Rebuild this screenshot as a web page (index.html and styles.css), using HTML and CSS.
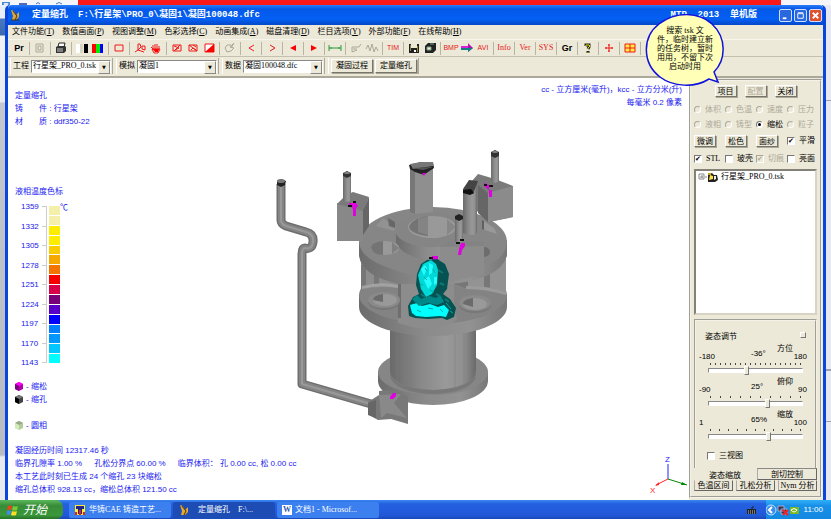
FILE: index.html
```
<!DOCTYPE html>
<html lang="zh-CN">
<head>
    <meta charset="UTF-8">
    <meta name="viewport" content="width=device-width, initial-scale=1.0">
    <title>定量缩孔</title>
    <link rel="stylesheet" href="styles.css">
</head>
<body>
    <div class="behind-top">
        <svg viewBox="0 0 78 5"><path d="M2 2h8v3H2z" fill="#4a88d0"/><path d="M4 3l1 2 1-2 1 2 1-2" stroke="#fff" fill="none"/><path d="M19 3h8v2h-8z" fill="#5868b8"/><path d="M36 4q2-3 4 0M56 4q3-3 6 0" stroke="#4878c8" fill="none"/></svg>
        <span class="behind-red"></span>
    </div>

    <div class="desktop">
        <div class="window">
            <header class="titlebar">
                <svg class="app-icon" viewBox="0 0 10 12"><path d="M1 1l3 1 2 4 3-3v5l-3 3H2l1-4z" fill="#e0a838"/><path d="M3 2l4 5-2 4M1 11h8" stroke="#4a3008" fill="none"/></svg>
                <h1>定量缩孔</h1>
                <span>F:\行星架\PRO_0\凝固1\凝固100048.dfc</span>
                <span class="edition">MTR&nbsp; 2013&nbsp; 单机版</span>
                <div class="win-buttons">
                    <button aria-label="最小化"><svg viewBox="0 0 12 12"><path d="M3 9h4" stroke="#fff" stroke-width="2"/></svg></button>
                    <button aria-label="最大化"><svg viewBox="0 0 12 12"><path d="M3 4h6v5H3zM3 3h6" stroke="#fff" fill="none"/></svg></button>
                    <button class="close" aria-label="关闭"><svg viewBox="0 0 12 12"><path d="M3 3l6 6M9 3l-6 6" stroke="#fff" stroke-width="2"/></svg></button>
                </div>
            </header>

            <nav class="menu">
                <button>文件功能(<u>T</u>)</button>
                <button>数值画面(<u>P</u>)</button>
                <button>视图调整(<u>M</u>)</button>
                <button>色彩选择(<u>C</u>)</button>
                <button>动画集成(<u>A</u>)</button>
                <button>磁盘清理(<u>D</u>)</button>
                <button>栏目选项(<u>Y</u>)</button>
                <button>外部功能(<u>F</u>)</button>
                <button>在线帮助(<u>H</u>)</button>
            </nav>

            <div class="toolbar">
                <button class="strong">Pr</button>
                <i></i>
                <button aria-label="页面"><svg viewBox="0 0 16 14"><path d="M4 3h7v8H4zM6 5h3v4H6z" stroke="#aca899" fill="none"/></svg></button>
                <i></i>
                <button aria-label="打印"><svg viewBox="0 0 16 14"><path d="M6 2h6l-1 4H5z" fill="#fff" stroke="#222"/><path d="M3 6l2-1h7l1 1v4l-2 2H3z" fill="#333"/><path d="M4 8h6M4 10h6" stroke="#ccc"/></svg></button>
                <i></i>
                <button aria-label="黑白"><svg viewBox="0 0 16 14"><path d="M2 3h4v9H2z" fill="#fff"/><path d="M6 3h3v9H6z" fill="#d8d4c4"/><path d="M10 3h4v9h-4z" fill="#000"/></svg></button>
                <button aria-label="彩色"><svg viewBox="0 0 16 14"><path d="M2 3h4v9H2z" fill="red"/><path d="M6 3h4v9H6z" fill="#0e0"/><path d="M10 3h3v9h-3z" fill="#00f"/></svg></button>
                <i></i>
                <button aria-label="框选"><svg viewBox="0 0 16 14"><path d="M4 4h8v6H4z" class="red"/></svg></button>
                <i></i>
                <button aria-label="旋转"><svg viewBox="0 0 16 14"><path d="M6 3v6l-3 2M6 3h2l1 3-3 3 6 2M10 5h3v4l-3-1z" class="red"/></svg></button>
                <button aria-label="移动"><svg viewBox="0 0 16 14"><path d="M5 8L3 6M5 9V4M7 8V3M9 8V3M11 8V5M4 8l2 4h4l2-4z" class="red"/><path d="M5 8h6l-1 3H7z" fill="red"/></svg></button>
                <i></i>
                <button aria-label="剖切一"><svg viewBox="0 0 16 14"><path d="M4 4h8v6H4zM5 10l6-6M5 5l5 2-4 2" class="red"/></svg></button>
                <button aria-label="剖切二"><svg viewBox="0 0 16 14"><path d="M4 4h8v6H4zM4 4l8 6M6 9l2-2 3 2M8 4l3 2" class="red"/></svg></button>
                <button aria-label="剖切三"><svg viewBox="0 0 16 14"><path d="M4 3h9v8H4z" fill="#fff" class="red"/><path d="M13 3v8H4z" fill="red"/></svg></button>
                <i></i>
                <button aria-label="还原"><svg viewBox="0 0 16 14"><path d="M9 4H5L3 7l2 4 4-1 3-3-4-1 4-4-3 5" class="gray"/></svg></button>
                <i></i>
                <button aria-label="后退"><svg viewBox="0 0 16 14"><path d="M11 4L6 7l5 3" class="red"/></svg></button>
                <i></i>
                <button aria-label="前进"><svg viewBox="0 0 16 14"><path d="M6 4l5 3-5 3" class="red"/></svg></button>
                <i></i>
                <button aria-label="倒放"><svg viewBox="0 0 16 14"><path d="M11 4v6L5 7z" fill="red"/></svg></button>
                <i></i>
                <button aria-label="播放"><svg viewBox="0 0 16 14"><path d="M5 4v6l6-3z" fill="red"/></svg></button>
                <i></i>
                <button aria-label="测距"><svg viewBox="0 0 16 14"><path d="M2 4v6M14 4v6M2 7h12M4 6v2M12 6v2" stroke="#2a9a3a" fill="none"/></svg></button>
                <i></i>
                <button aria-label="标注"><svg viewBox="0 0 16 14"><path d="M4 6h7l2-3M4 6v5l5-2M5 8h4" class="gray"/></svg></button>
                <button aria-label="曲线"><svg viewBox="0 0 16 14"><path d="M2 8l2-4 2 6 2-7 2 8 2-5 2 4" class="gray"/></svg></button>
                <i></i>
                <button class="tag">TIM</button>
                <i></i>
                <button aria-label="保存"><svg viewBox="0 0 16 14"><path d="M3 3h10v9H3z" fill="#222"/><path d="M4 4h1v6H4zM11 5h1v6h-1z" fill="#8a8a30"/><path d="M5 3h6v4H5z" fill="#ece9d8"/><path d="M8 9h2v2H8z" fill="#fff"/></svg></button>
                <button aria-label="另存"><svg viewBox="0 0 16 14"><path d="M6 2h8v7l-3 3H3V5z" fill="#222"/><path d="M5 6h4v3H5zM8 3h4" fill="#ece9d8" stroke="#7aa080"/></svg></button>
                <i></i>
                <button class="tag">BMP</button>
                <button aria-label="转换"><svg viewBox="0 0 16 14"><path d="M2 5h7V2l5 5-5 4V9H2z" fill="#e020e0"/><path d="M2 7h12l-5 4V9H2z" fill="#108080"/><path d="M9 3l5 4h-5z" fill="#111" opacity=".3"/></svg></button>
                <button class="tag">AVI</button>
                <i></i>
                <button class="tag serif">Info</button>
                <i></i>
                <button class="tag serif">Ver</button>
                <i></i>
                <button class="tag serif">SYS</button>
                <i></i>
                <button class="strong">Gr</button>
                <i></i>
                <button aria-label="帮助"><svg viewBox="0 0 16 14"><path d="M6 5V4h3v2L8 8M8 10v2" stroke="#222" stroke-width="3" fill="none"/><path d="M6 5V4h3l1 1-2 2v1M8 11v1" stroke="#e8e000" fill="none"/></svg></button>
                <i></i>
                <button aria-label="居中"><svg viewBox="0 0 16 14"><path d="M8 3v8M4 7h8M7 4h2M7 10h2M5 6v2M11 6v2" class="red"/></svg></button>
                <i></i>
                <button aria-label="多视图"><svg viewBox="0 0 16 14"><path d="M3 3h10v8H3zM8 3v8M3 7h10" fill="#ffee40" class="red"/></svg></button>
                <i></i>
            </div>

            <div class="picker-bar">
                <div class="picker">
                    <label for="project">工程</label>
                    <span class="drop"><select id="project"><option>行星架_PRO_0.tsk</option></select></span>
                </div>
                <div class="picker">
                    <label for="simulation">模拟</label>
                    <span class="drop"><select id="simulation"><option>凝固1</option></select></span>
                </div>
                <div class="picker">
                    <label for="data">数据</label>
                    <span class="drop"><select id="data"><option>凝固100048.dfc</option></select></span>
                </div>
                <div class="picker">
                    <button class="btn">凝固过程</button>
                    <button class="btn">定量缩孔</button>
                </div>
            </div>

            <main>
                <section class="viewport">
                    <div class="view-head">
                        <div class="part">
                            <p>定量缩孔</p>
                            <p>铸<span class="wide-gap"></span>件 : 行星架</p>
                            <p>材<span class="wide-gap"></span>质 : ddf350-22</p>
                        </div>
                        <div class="units">
                            <p>cc - 立方厘米(毫升)，kcc - 立方分米(升)</p>
                            <p>每毫米 0.2 像素</p>
                        </div>
                    </div>

                    <div class="view-body">
                        <div class="legend">
                            <h2>液相温度色标</h2>
                            <div class="scale">
                                <ol class="temps">
                                    <li>1359</li><li>1332</li><li>1305</li><li>1278</li><li>1251</li><li>1224</li><li>1197</li><li>1170</li><li>1143</li>
                                </ol>
                                <div class="colors">
                                    <i class="c1"></i><i class="c1"></i><i class="c2"></i><i class="c2"></i>
                                    <i class="c3"></i><i class="c4"></i><i class="c5"></i><i class="c6"></i>
                                    <i class="c7"></i><i class="c8"></i><i class="c9"></i><i class="c10"></i>
                                    <i class="c11"></i><i class="c12"></i><i class="c13"></i><i class="c14"></i>
                                </div>
                                <span class="celsius">℃</span>
                            </div>
                            <ul class="phases">
                                <li><svg viewBox="0 0 8 9"><path d="M4 0l4 2v5L4 9 0 7V2z" fill="#b000b0"/><path d="M4 0l4 2-4 2-4-2z" fill="#f0f"/><path d="M0 2l4 2v5L0 7z" fill="#800080"/></svg>- 缩松</li>
                                <li><svg viewBox="0 0 8 9"><path d="M4 0l4 2v5L4 9 0 7V2z" fill="#444"/><path d="M4 0l4 2-4 2-4-2z" fill="#777"/><path d="M0 2l4 2v5L0 7z" fill="#000"/></svg>- 缩孔</li>
                                <li class="solid"><svg viewBox="0 0 8 9"><path d="M4 0l4 2v5L4 9 0 7V2z" fill="#b4cc9c"/><path d="M4 0l4 2-4 2-4-2z" fill="#98a888"/><path d="M0 2l4 2v5L0 7z" fill="#d4ecbc"/></svg>- 圆相</li>
                            </ul>
                        </div>

                        <svg class="model" viewBox="265 140 260 290" role="img" aria-label="行星架模型">
                            <defs>
                                <linearGradient id="cyl"><stop offset="0" stop-color="#6a6a6a"/><stop offset=".35" stop-color="#888"/><stop offset=".65" stop-color="#999"/><stop offset=".85" stop-color="#909090"/><stop offset="1" stop-color="#6a6a6a"/></linearGradient>
                                <linearGradient id="rim"><stop offset="0" stop-color="#6c6c6c"/><stop offset=".45" stop-color="#8b8b8b"/><stop offset=".75" stop-color="#929292"/><stop offset="1" stop-color="#787878"/></linearGradient>
                            </defs>
                            <!-- feed pipe -->
                            <g fill="none" stroke-linejoin="round">
                                <path d="M281 184v36q0 4 5 6l20 6q8 2 7 10t-8 6q-3 0-3 6v130l69 20" stroke="#6e6e6e" stroke-width="9"/>
                                <path d="M281 184v36q0 4 5 6l20 6q8 2 7 10t-8 6q-3 0-3 6v130l69 20" stroke="#858585" stroke-width="6"/>
                                <path d="M281 184v36q0 4 5 6l20 6q8 2 7 10t-8 6q-3 0-3 6v130l69 20" stroke="#999" stroke-width="2"/>
                            </g>
                            <path d="M277 181l4-2 5 2-1 4-4 2-4-2z" fill="#222"/><ellipse cx="281" cy="181" rx="4" ry="2" fill="#777"/>
                            <!-- base flange -->
                            <path d="M378 372v9a55 24 0 0 0 110 0v-9z" fill="url(#rim)"/>
                            <ellipse cx="433" cy="372" rx="55" ry="23" fill="#868686"/>
                            <path d="M390 315v56a43 19 0 0 0 86 0v-56z" fill="url(#cyl)"/>
                            <path d="M390 371a43 19 0 0 0 86 0v4a43 19 0 0 1-86 0z" fill="#787878"/>
                            <path d="M397 325v58M404 325v61M412 325v64M455 325v63M464 325v59" stroke="#7f7f7f" opacity=".5"/>
                            <!-- lower disc -->
                            <path d="M359 294v13a74 29 0 0 0 148 0v-13z" fill="url(#rim)"/>
                            <ellipse cx="433" cy="295" rx="74" ry="29" fill="#838383"/>
                            <path d="M361 256h37v32q-20-3-37 2z" fill="#8d8d8d"/>
                            <path d="M361 265h5v23l-5 2zM374 275h5v10h-5z" fill="#777"/>
                            <path d="M362 286q18-5 36-1v3q-18-4-36 1z" fill="#a2a2a2"/>
                            <path d="M455 270l26-8h25v30q-20-7-38-3l-13-5z" fill="#777"/>
                            <path d="M468 272h16v15h-16zM490 258h16v34l-16-4z" fill="#939393"/>
                            <path d="M466 286q20-1 40 6v3q-20-6-40-6z" fill="#9b9b9b"/>
                            <path d="M398 270h56v34l3 15q-6 9-41 9l-18-5z" fill="#8c8c8c"/>
                            <path d="M398 276h3v42h-3z" fill="#6e6e6e"/>
                            <ellipse cx="384" cy="302" rx="16" ry="8" fill="#777"/><ellipse cx="384" cy="300" rx="16" ry="8" fill="#8a8a8a"/><ellipse cx="385" cy="300" rx="12" ry="6" fill="#999"/><path d="M373 300a12 6 0 0 1 10-6v8z" fill="#6b6b6b"/>
                            <ellipse cx="475" cy="305" rx="16" ry="8" fill="#777"/><ellipse cx="475" cy="303" rx="16" ry="8" fill="#8a8a8a"/><ellipse cx="475" cy="304" rx="12" ry="6" fill="#999"/><path d="M463 304a12 6 0 0 1 10-6v9z" fill="#6b6b6b"/>
                            <!-- upper disc -->
                            <path d="M359 242v14q3 20 40 28l50 0q50-4 58-28v-16z" fill="url(#rim)"/>
                            <path d="M359 242a74 35 0 0 1 148 0q-1 17-24 25l-42 11q-25 1-52-10-29-10-30-26z" fill="#868686"/>
                            <path d="M383 218l5 4 8 5-2 4-18-5z" fill="#929292"/><path d="M388 218l7 4v6l-6-2z" fill="#676767"/>
                            <path d="M482 220l12 8 3 6-15-5z" fill="#999"/><path d="M482 220l2 1v9l-2-1z" fill="#606060"/>
                            <path d="M396 231v12q8 15 36 17l30-4v-20z" fill="url(#rim)"/>
                            <ellipse cx="431" cy="230" rx="36" ry="17" fill="#858585"/>
                            <ellipse cx="432" cy="227" rx="24" ry="11" fill="#999"/>
                            <path d="M409 227q3-9 19-11v20q-17-2-19-9z" fill="#747474"/><path d="M418 219l10-3v19l-10-3z" fill="#848484"/><path d="M447 219l9 8-9 8z" fill="#878787"/>
                            <ellipse cx="385" cy="248" rx="14" ry="7" fill="#999"/><path d="M371 248a14 7 0 0 1 12-7v14q-10 0-12-7z" fill="#747474"/><path d="M392 242l7 6-7 6z" fill="#808080"/>
                            <ellipse cx="484" cy="252" rx="6" ry="5" fill="#6d6d6d"/>
                            <path d="M440 247l44-3v30l-34 8-10-15z" fill="#8c8c8c"/>
                            <path d="M440 247l10-6 34 1v4z" fill="#838383"/>
                            <!-- risers and blocks -->
                            <path d="M337 203l26 7v31h-26z" fill="#888"/><path d="M337 204l9-9 7-3 16 5-6 14z" fill="#7a7a7a"/><path d="M363 210l6-13v29l-6 9z" fill="#666"/>
                            <path d="M343 174h8v27l-4 1-4-1z" fill="url(#cyl)"/><path d="M343 173l4-2 4 2v3l-4 2-4-2z" fill="#333"/><ellipse cx="347" cy="173" rx="3" ry="1" fill="#888"/>
                            <path d="M410 168h23v44l-18 2-5-2z" fill="#8f8f8f"/><path d="M410 168h5v46l-5-2z" fill="#777"/>
                            <path d="M409 165l12-3 12 0 1 6-6 4-4 3-9-3-5-3z" fill="#222"/><path d="M410 164l11-2h12v4l-20 3z" fill="#777"/><path d="M411 168l22-1-10 3z" fill="#555"/>
                            <path d="M472 181l6-7 17 5 18 7v31l-24 5-12-11z" fill="#7a7a7a"/><path d="M488 193l25-7v31l-25 5z" fill="#8b8b8b"/><path d="M478 185l10 8v29l-10-9z" fill="#666"/>
                            <path d="M491 153h8v28l-4 2-4-2z" fill="url(#cyl)"/><path d="M491 152l4-2 4 2v4l-4 2-4-2z" fill="#333"/><ellipse cx="495" cy="152" rx="3" ry="1" fill="#888"/>
                            <path d="M463 190l14-9v52q-5 4-14 0z" fill="url(#cyl)"/><path d="M463 189l6-9 9 1-5 13-9-1z" fill="#444"/><path d="M463 190l8-1 3 4-4 2-7-2z" fill="#111"/>
                            <path d="M455 217h8v25h-8z" fill="url(#cyl)"/><path d="M455 216l4-2 4 2v3l-4 2-4-2z" fill="#222"/>
                            <!-- runner end -->
                            <path d="M368 402l11-7v-4l8-1 14 3 7 4v27l-17-5-13 1-9-5z" fill="#787878"/>
                            <path d="M379 395l22-1-7 9 13 15-20-5-6 5z" fill="#898989"/><path d="M368 403l8-3v18l-8-3z" fill="#666"/>
                            <!-- shrinkage -->
                            <g fill="#e000e0"><path d="M352 207h4v9h-3v-6zM349 203h7l2 3-3 3-3-3h-3zM422 173h4l-2 3zM484 183l5 2 0 5h3v7h-3v-7l-5-4zM461 243h4v3l-3 4-1 5h-3l1-6zM432 256h6v4h-6zM390 397l3-4h3v3l-3 3h-3z"/></g>
                            <path d="M348 206h4M353 202h3M484 185h3M489 186h4M456 243h4M460 240h4M429 258h4" stroke="#111" stroke-width="2"/>
                            <!-- liquid core -->
                            <path d="M417 274l4-10 6-4 10-1 8 5 4 10-2 15-4 5 7 5 6 9-2 9-7 3-5-2-14 1-13-1-6-2-1-10 5-9 6-3-3-9z" fill="#065252"/>
                            <path d="M418 275l5-11 8-4 5 4 2 6-1 15-5 9-6 3-5-8z" fill="#00d8d8"/>
                            <path d="M421 269l4-4 2 3-3 8zM429 263l4 2-1 8-3 2zM424 280l5-4 3 8-4 5zM434 277h3v6l-3 2z" fill="#2ff"/>
                            <path d="M410 305l7-2 5 3 8-2 8 3 6-2 5 5-3 7-6-1-14 1-10-1-4-3z" fill="#0ff"/>
                            <path d="M412 299l5-4 4 4 8-3 7 2 4-3 4 7-7 3-9-2-9 3z" fill="#008888"/>
                            <path d="M424 277l3 3M420 284l3 1M433 269l2 4M430 290l4 2M417 310l4 2M428 308l5 1M440 309l3 3M425 268l2 3M446 303l5 6M450 311l3 2" stroke="#0aa"/>
                            <path d="M438 270l5 3M440 283l4 2M421 294l4 3M436 294l4 2M445 299l4 3" stroke="#0b7777" stroke-width="2"/>
                        </svg>
                    </div>

                    <div class="view-foot">
                        <div class="stats">
                            <p>凝固经历时间 12317.46 秒</p>
                            <p><span>临界孔隙率 1.00 %</span><span>孔松分界点 60.00 %</span><span>临界体积： 孔 0.00 cc, 松 0.00 cc</span></p>
                            <p>本工艺此时刻已生成 24 个缩孔 23 块缩松</p>
                            <p>缩孔总体积 928.13 cc，缩松总体积 121.50 cc</p>
                        </div>
                        <svg class="axes" viewBox="0 -6 40 46">
                            <path d="M20 22V7" stroke="#22f"/><path d="M20 22L8 28" stroke="#f22"/><path d="M20 22l19 6" stroke="#080"/>
                            <path d="M11 25l-4 4 4-1z" fill="#f22"/><path d="M34 25l5 3-6 0z" fill="#080"/>
                            <text x="17" y="5" fill="#22f">Z</text><text x="2" y="36" fill="#f22">X</text>
                        </svg>
                    </div>
                </section>

                <aside class="panel">
                    <div class="panel-top">
                        <button class="btn">项目</button>
                        <button class="btn" disabled>配置</button>
                        <button class="btn">关闭</button>
                    </div>
                    <div class="options">
                        <label><input type="radio" name="field" disabled>体积</label>
                        <label><input type="radio" name="field" disabled>色温</label>
                        <label><input type="radio" name="field" disabled>速度</label>
                        <label><input type="radio" name="field" disabled>压力</label>
                        <label><input type="radio" name="field" disabled>液相</label>
                        <label><input type="radio" name="field" disabled>铸型</label>
                        <label><input type="radio" name="field" checked>缩松</label>
                        <label><input type="radio" name="field" disabled>粒子</label>
                    </div>
                    <div class="options checks">
                        <button class="btn">微调</button>
                        <button class="btn">松色</button>
                        <button class="btn">面纱</button>
                        <label><input type="checkbox" checked>平滑</label>
                        <label><input type="checkbox" checked>STL</label>
                        <label><input type="checkbox">玻壳</label>
                        <label><input type="checkbox" checked disabled>切痕</label>
                        <label><input type="checkbox">亮面</label>
                    </div>
                    <div class="tree">
                        <svg viewBox="0 0 20 10"><path d="M1 2h5v5H1zM2 5h3M4 3v3M7 5h2" stroke="#888" fill="none"/><path d="M10 3l4-2 2 2 3 0 1 5-3 2h-7z" fill="#222"/><path d="M12 3l3 1v3l-4 1z" fill="#ffe040"/><path d="M16 4l2 0v3l-2 1z" fill="#eee"/><path d="M10 1h3v2h-3z" fill="#c8a020"/></svg>
                        <span>行星架_PRO_0.tsk</span>
                    </div>
                    <div class="pose">
                        <div class="pose-head"><h2>姿态调节</h2><button aria-label="折叠"></button></div>
                        <div class="slider">
                            <div class="slider-text"><span>-180</span><output>-36°</output><label for="azimuth">方位</label><span>180</span></div>
                            <div class="ticks ticks-5"></div>
                            <input type="range" id="azimuth" min="-180" max="180" value="-36">
                        </div>
                        <div class="slider">
                            <div class="slider-text"><span>-90</span><output>25°</output><label for="pitch">俯仰</label><span>90</span></div>
                            <div class="ticks ticks-10"></div>
                            <input type="range" id="pitch" min="-90" max="90" value="25">
                        </div>
                        <div class="slider">
                            <div class="slider-text"><span>1</span><output>65%</output><label for="zoom">缩放</label><span>100</span></div>
                            <div class="ticks ticks-9"></div>
                            <input type="range" id="zoom" min="1" max="100" value="65">
                        </div>
                        <label class="three"><input type="checkbox">三视图</label>
                    </div>
                    <div class="tabs">
                        <button class="current">姿态缩放</button>
                        <button>剖切控制</button>
                    </div>
                    <div class="tabs-low">
                        <button>色温区间</button>
                        <button>孔松分析</button>
                        <button>Nym 分析</button>
                    </div>
                </aside>
            </main>

            <div class="callout">
                <svg viewBox="0 0 80 74"><path d="M64 65C50 74 28 73 15 63-3 49-3 23 14 10 31-3 54-2 67 10c15 14 14 36 2 48l4 10z" fill="#ffffb8" stroke="#11d" stroke-width="1.5"/></svg>
                <p>搜索 tsk 文<br>件，临时建立新<br>的任务树，暂时<br>用用，不留下次<br>启动时用</p>
            </div>
        </div>
        <div class="behind-right"><i></i><i></i></div>
    </div>

    <footer class="taskbar">
        <button class="start"><svg viewBox="0 0 12 12"><path d="M1 2q2-1 4 0L4 6Q2 5 0 6z" fill="#f04020"/><path d="M6 2q3 1 5 0l-1 4q-2 1-5 0z" fill="#7c3"/><path d="M0 7q2-1 4 0l-1 4q-2-1-4 0z" fill="#48f"/><path d="M5 7q3 1 5 0l-1 4q-2 1-5 0z" fill="#fd2"/></svg>开始</button>
        <button class="task"><svg viewBox="0 0 12 12"><path d="M1 1h10v10H1z" fill="#fe3"/><path d="M2 2h8v3H8v5H4V5H2z" fill="#228"/><path d="M5 6h2v5H5zM1 8h2v3H1zM9 8h2v3H9z" fill="#d22"/></svg>华铸CAE 铸造工艺...</button>
        <button class="task active"><svg viewBox="0 0 12 12"><path d="M2 1l3 1 2 4 3-3v5l-3 3H3l1-4z" fill="#e0a838"/><path d="M4 2l4 5-2 4" stroke="#4a3008" fill="none"/></svg><span>定量缩孔</span>F:\...</button>
        <button class="task"><span class="word">W</span>文档1 - Microsof...</button>
        <svg class="keyboard" viewBox="0 0 9 10"><path d="M0 4h9v5H0z" fill="#222"/><path d="M5 4V2h2" stroke="#222" fill="none"/><path d="M1 6h7M1 8h7" stroke="#ccc" stroke-dasharray="1"/></svg>
        <div class="tray">
            <svg viewBox="0 0 34 12"><circle cx="5" cy="6" r="5" fill="#3a8ef0" stroke="#bfe0ff"/><path d="M6 3L3 6l3 3" stroke="#fff" stroke-width="2" fill="none"/><path d="M12 2h6v5h-6zM15 5h6v5h-6z" fill="#335" stroke="#aac"/><path d="M17 6l5 5M22 6l-5 5" stroke="#e22" stroke-width="2"/><path d="M24 3h9v7h-9z" fill="#7ab828"/><path d="M25 6q3-3 6 0-3 4-6 0" fill="none" stroke="#fff"/></svg>
            <time>11:00</time>
        </div>
    </footer>
</body>
</html>
```

FILE: styles.css
```
* {
    box-sizing: border-box;
}
body {
    margin: 0;
    min-height: 100vh;
    display: flex;
    flex-direction: column;
    background-color: #fff;
    font-family: "Liberation Serif", "Noto Sans CJK SC", serif;
    font-size: 8px;
    line-height: 10px;
    color: #000;
}
p, h1, h2, ol, ul {
    margin: 0;
    padding: 0;
    font-size: inherit;
    font-weight: normal;
    list-style: none;
}
button, select, input {
    font: inherit;
    color: inherit;
    margin: 0;
    padding: 0;
}
button {
    border: none;
    background: none;
    white-space: nowrap;
}
svg {
    display: block;
    flex: none;
}

/* what shows round the window */
.behind-top {
    display: flex;
    height: 5px;
    padding-right: 50px;
    background-color: #f4f6fa;
}
.behind-top svg {
    width: 78px;
    height: 5px;
}
.behind-red {
    flex: 1;
    background-color: #fa1818;
}
.desktop {
    flex: 1;
    display: flex;
    padding-left: 5px;
    background: linear-gradient(#e8eefa 0 13px, #4a78c0 14px, #3a68b0 30px, #f0f2f5 31px, #e8eaee 97px, #c4c8ce 98px, #b8bcc2 450px, #e8eaee 452px);
}
.behind-right {
    width: 5px;
    padding-top: 95px;
    background-color: #e6e8f2;
}
.behind-right i {
    display: block;
    height: 270px;
    border-top: 1px solid #9aa0b0;
    border-bottom: 1px solid #9aa0b0;
}
.behind-right i + i {
    height: 52px;
}

.window {
    position: relative;
    flex: 1;
    display: flex;
    flex-direction: column;
    border: solid #0a46dc;
    border-width: 0 3px;
    border-radius: 5px 5px 0 0;
    background-color: #ece9d8;
}
.titlebar {
    display: flex;
    align-items: center;
    height: 20px;
    padding: 0 1px 0 2px;
    border-radius: 4px 4px 0 0;
    background: linear-gradient(#2a7cf8, #0458e8 20%, #0460f4 70%, #0448c8);
    color: #fff;
    font-family: "Liberation Mono", "Noto Sans CJK SC", monospace;
    font-size: 9px;
    font-weight: bold;
    white-space: pre;
}
.titlebar h1 {
    margin: 0 10px 0 12px;
    font-weight: bold;
}
.app-icon {
    width: 10px;
    height: 12px;
}
.edition {
    margin-left: auto;
    margin-right: 22px;
}
.win-buttons {
    display: flex;
    gap: 2px;
}
.win-buttons button {
    width: 13px;
    height: 13px;
    border: 1px solid #cfe0ff;
    border-radius: 2px;
    background-color: #2a68e0;
}
.win-buttons .close {
    background-color: #e0502c;
}

.menu {
    display: flex;
    gap: 8px;
    height: 14px;
    padding-left: 4px;
}
.toolbar {
    display: flex;
    align-items: center;
    height: 17px;
    padding-left: 3px;
    border-top: 1px solid #f8f6ec;
}
.toolbar button {
    display: flex;
    justify-content: center;
    width: 16px;
    flex: none;
}
.toolbar svg {
    width: 16px;
    height: 14px;
}
.toolbar i {
    width: 1px;
    height: 13px;
    margin: 0 2px;
    flex: none;
    background-color: #b8b4a4;
}
.toolbar .strong {
    font-family: "Liberation Sans", sans-serif;
    font-size: 9px;
    font-weight: bold;
}
.toolbar .tag {
    font-family: "Liberation Sans", sans-serif;
    font-size: 7px;
    color: #e81818;
}
.toolbar .serif {
    font-family: "Liberation Serif", serif;
    font-size: 8px;
}
.red {
    stroke: #f01818;
}
.red:not([fill]), .gray {
    fill: none;
}
.gray {
    stroke: #aca899;
}

.picker-bar {
    display: flex;
    gap: 3px;
    height: 22px;
    padding: 1px 2px 2px;
    border-top: 1px solid #c4c0b0;
    border-bottom: 2px solid #aca899;
}
.picker {
    display: flex;
    align-items: center;
    gap: 2px;
    padding: 0 1px 0 2px;
    border-left: 1px solid #fff;
    border-right: 1px solid #aca899;
}
.drop {
    position: relative;
    width: 80px;
}
.drop select {
    appearance: none;
    display: block;
    width: 100%;
    height: 13px;
    padding: 0 1px;
    border: 1px solid;
    border-color: #888 #fff #fff #888;
    border-radius: 0;
    background-color: #fff;
}
.drop::after {
    content: "▼";
    position: absolute;
    top: 1px;
    right: 1px;
    width: 10px;
    height: 11px;
    border: 1px solid;
    border-color: #fff #888 #888 #fff;
    background-color: #ece9d8;
    font-family: "DejaVu Sans", sans-serif;
    font-size: 5px;
    text-align: center;
    pointer-events: none;
}
.btn {
    padding: 0 3px;
    border: 1px solid;
    border-color: #fff #77746a #77746a #fff;
    background-color: #ece9d8;
    box-shadow: 1px 1px #aca899;
}
.btn:disabled {
    color: #aca899;
}
.picker .btn {
    height: 14px;
    padding: 0 4px;
}

main {
    flex: 1;
    display: flex;
}

/* 3D view */
.viewport {
    flex: 1;
    display: flex;
    flex-direction: column;
    padding: 5px 7px 3px;
    background-color: #fff;
    color: #2020f0;
    font-family: "Liberation Sans", "Noto Sans CJK SC", sans-serif;
    line-height: 13px;
}
.view-head {
    display: flex;
    justify-content: space-between;
    height: 57px;
}
.part {
    padding-top: 6px;
}
.wide-gap {
    display: inline-block;
    width: 16px;
}
.units {
    text-align: right;
}
.view-body {
    flex: 1;
    display: flex;
}
.legend {
    width: 92px;
    padding-top: 45px;
}
.scale {
    display: flex;
    height: 169px;
    margin-top: 2px;
    padding-left: 6px;
}
.temps {
    display: flex;
    flex-direction: column;
    justify-content: space-between;
    width: 25px;
}
.temps li {
    display: flex;
    align-items: center;
    justify-content: space-between;
}
.temps li::after {
    content: "";
    width: 4px;
    height: 1px;
    background-color: #ccc;
}
.colors {
    display: flex;
    flex-direction: column;
    gap: 1px;
    width: 14px;
    margin: 6px 0;
    padding-left: 2px;
    border-left: 1px solid #ccc;
}
.colors i {
    flex: 1;
}
.c1 { background-color: #f4f0ac; }
.c2 { background-color: #fcec00; }
.c3 { background-color: #f8cc00; }
.c4 { background-color: #f4a800; }
.c5 { background-color: #f47400; }
.c6 { background-color: #f80000; }
.c7 { background-color: #d80048; }
.c8 { background-color: #780078; }
.c9 { background-color: #5800c8; }
.c10 { background-color: #0000fc; }
.c11 { background-color: #0080ff; }
.c12 { background-color: #0098ff; }
.c13 { background-color: #00c8ff; }
.c14 { background-color: #00ffff; }
.celsius {
    padding-top: 1px;
}
.phases {
    margin-top: 11px;
}
.phases li {
    display: flex;
    align-items: center;
    gap: 3px;
}
.phases svg {
    width: 8px;
    height: 9px;
}
.phases .solid {
    margin-top: 13px;
}
.model {
    width: 260px;
    height: 290px;
    margin: 0 auto;
}
.view-foot {
    display: flex;
    justify-content: space-between;
    align-items: flex-end;
}
.stats {
    padding-bottom: 1px;
}
.stats span {
    margin-right: 12px;
}
.axes {
    width: 40px;
    height: 46px;
    margin-right: -6px;
}

/* right panel */
.panel {
    display: flex;
    flex-direction: column;
    width: 133px;
    margin: 1px 1px 2px 0;
    padding: 4px 3px 5px;
    border: 2px groove #f4f2e6;
}
.panel-top {
    display: flex;
    justify-content: center;
    gap: 8px;
    margin-bottom: 5px;
}
.panel .btn {
    width: 22px;
    height: 12px;
    padding: 0;
    line-height: 9px;
}
.options {
    display: grid;
    grid-template-columns: repeat(4, 31px);
    grid-auto-rows: 15px;
    align-items: center;
}
.checks {
    grid-auto-rows: 18px;
    margin-bottom: 1px;
}
.options label, .three {
    display: flex;
    align-items: center;
    gap: 4px;
    white-space: nowrap;
}
.options label:has(:disabled) {
    color: #aca899;
}
.panel input[type="radio"], .panel input[type="checkbox"] {
    appearance: none;
    display: grid;
    place-items: center;
    width: 8px;
    height: 8px;
    flex: none;
    border: 1px solid;
    border-color: #777 #fff #fff #777;
    background-color: #fff;
    line-height: 6px;
}
.panel input[type="radio"] {
    width: 7px;
    height: 7px;
    border-radius: 50%;
}
.panel input:disabled {
    background-color: #ece9d8;
    border-color: #aca899 #fff #fff #aca899;
}
.panel input[type="radio"]:checked::before {
    content: "";
    width: 3px;
    height: 3px;
    border-radius: 50%;
    background-color: #000;
}
.panel input[type="checkbox"]:checked::before {
    content: "✔";
    font-family: "DejaVu Sans", sans-serif;
    font-size: 7px;
}
.tree {
    flex: 1;
    display: flex;
    gap: 3px;
    padding: 1px 2px;
    border: 2px inset #d8d4c4;
    background-color: #fff;
}
.tree svg {
    width: 20px;
    height: 10px;
}
.pose {
    margin-top: 4px;
    padding: 11px 9px 7px;
    border: 2px groove #f4f2e6;
    border-bottom: none;
}
.pose-head {
    display: flex;
    justify-content: space-between;
    margin-bottom: 1px;
}
.pose-head button {
    width: 6px;
    height: 6px;
    border: 1px solid;
    border-color: #fff #777 #777 #fff;
}
.slider {
    margin-bottom: 3px;
}
.slider-text {
    display: grid;
    grid-template-columns: 52px 26px 12px 1fr;
    align-items: end;
    height: 19px;
    margin: 0 -1px 0 -6px;
    font-family: "Liberation Sans", "Noto Sans CJK SC", sans-serif;
    white-space: nowrap;
}
.slider-text output {
    padding-bottom: 3px;
}
.slider-text label {
    padding-bottom: 8px;
}
.slider-text span:last-child {
    text-align: right;
}
.ticks {
    width: 91px;
    height: 2px;
    margin: 1px auto 3px;
}
.ticks-5 {
    background: repeating-linear-gradient(90deg, #444 0 1px, transparent 1px 5px);
}
.ticks-10 {
    background: repeating-linear-gradient(90deg, #444 0 1px, transparent 1px 10px);
}
.ticks-9 {
    background: repeating-linear-gradient(90deg, #444 0 1px, transparent 1px 9px);
}
.slider input {
    appearance: none;
    display: block;
    width: 95px;
    height: 5px;
    margin: 0 auto;
    border: 1px solid;
    border-color: #888 #fff #fff #888;
    background-color: #fff;
}
.slider input::-webkit-slider-thumb {
    appearance: none;
    width: 5px;
    height: 9px;
    border: 1px solid;
    border-color: #fff #777 #777 #fff;
    background-color: #ece9d8;
}
.three {
    margin: 12px 0 0 2px;
}
.tabs {
    display: flex;
    justify-content: space-between;
}
.tabs button {
    width: 60px;
    height: 12px;
}
.tabs .current {
    padding-top: 3px;
    padding-left: 2px;
}
.tabs button:not(.current), .tabs-low button {
    border: 1px solid;
    border-color: #888 #666 #666 #aaa;
    line-height: 9px;
}
.tabs-low {
    display: flex;
    gap: 3px;
}
.tabs-low button {
    flex: 1;
    height: 11px;
    border-top-color: #ece9d8;
}

.callout {
    position: absolute;
    top: 9px;
    right: 98px;
    width: 80px;
    height: 74px;
    text-align: center;
    line-height: 9px;
}
.callout svg {
    position: absolute;
    inset: 0;
}
.callout p {
    position: relative;
    padding-top: 12px;
}

/* taskbar */
.taskbar {
    display: flex;
    align-items: center;
    gap: 2px;
    height: 20px;
    border-bottom: 1px solid #fff;
    background: linear-gradient(#3a88f0, #2460e0 20%, #2258d8 80%, #1a48b8);
    color: #fff;
}
.start {
    display: flex;
    align-items: center;
    gap: 4px;
    width: 63px;
    height: 100%;
    margin-right: 4px;
    padding-left: 7px;
    border-radius: 0 7px 7px 0;
    background: linear-gradient(#5cb85c, #388c38 30%, #3a983a 80%, #287028);
    font-size: 12px;
    font-style: italic;
}
.taskbar svg {
    width: 12px;
    height: 12px;
}
.task {
    display: flex;
    align-items: center;
    gap: 3px;
    width: 102px;
    height: 16px;
    padding-left: 5px;
    border-radius: 2px;
    background-color: #3c80f0;
}
.task.active {
    background-color: #1c4cb4;
}
.active span {
    margin: 0 5px;
}
.word {
    width: 10px;
    background-color: #fff;
    color: #2a60b0;
    font-weight: bold;
    text-align: center;
}
.taskbar .keyboard {
    width: 9px;
    height: 10px;
    margin-left: auto;
    margin-right: 8px;
}
.tray {
    display: flex;
    align-items: center;
    gap: 4px;
    height: 100%;
    padding-right: 8px;
    background: linear-gradient(#30b0f8, #1890e8 30%, #1488e0);
    font-family: "Liberation Sans", sans-serif;
}
.taskbar .tray svg {
    width: 34px;
}
```
